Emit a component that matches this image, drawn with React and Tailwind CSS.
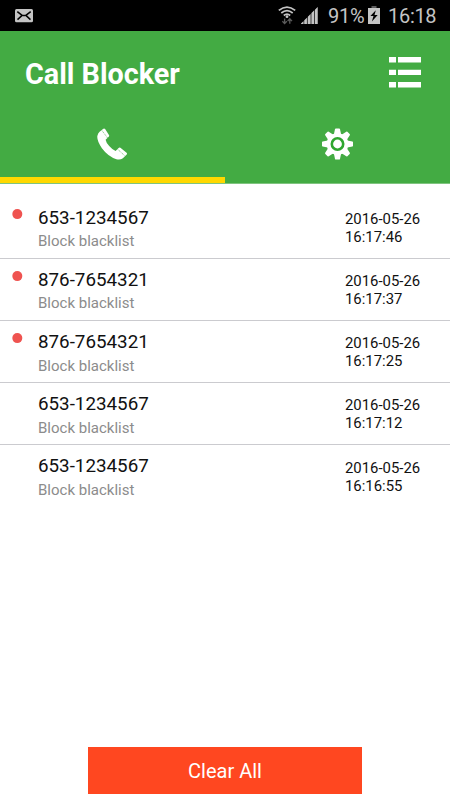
import React from "react";

const calls = [
  { number: "653-1234567", date: "2016-05-26", time: "16:17:46", unread: true },
  { number: "876-7654321", date: "2016-05-26", time: "16:17:37", unread: true },
  { number: "876-7654321", date: "2016-05-26", time: "16:17:25", unread: true },
  { number: "653-1234567", date: "2016-05-26", time: "16:17:12", unread: false },
  { number: "653-1234567", date: "2016-05-26", time: "16:16:55", unread: false },
];

function MailIcon() {
  return (
    <svg width="18" height="14" viewBox="0 0 18 14">
      <rect width="18" height="13.3" rx="1.5" fill="#c4c4c4" />
      <path d="M2.3 2.6 7.2 6.4h3.6l4.9-3.8M2.5 10.6l4.1-3.7M15.5 10.6l-4.1-3.7" fill="none" stroke="#000" strokeWidth="1.5" />
    </svg>
  );
}

function WifiIcon() {
  return (
    <svg width="18" height="19" viewBox="0 0 18 19">
      <g fill="none" stroke="#c4c4c4" strokeWidth="1.7">
        <path d="M.8 4.4Q9-2.3 17.2 4.4" />
        <path d="M3.3 7Q9 2.4 14.7 7" />
        <path d="M5.8 9.5Q9 6.9 12.2 9.5" />
      </g>
      <circle cx="9" cy="10.7" r="1.4" fill="#c4c4c4" />
      <path d="M6.6 12.5v5M4.4 15.2l2.2 2.4 2.2-2.4M11.8 17.8v-5M9.6 15.1l2.2-2.4 2.2 2.4" fill="none" stroke="#5c5c5c" strokeWidth="1.3" />
    </svg>
  );
}

function SignalIcon() {
  return (
    <svg width="17" height="17" viewBox="0 0 17 17">
      <path d="M0 17 16.7 0v17z" fill="#3c3c3c" />
      <path d="M0 17v-.6l2.4-2.2V17zM3.3 17v-3.7l2.6-2.6V17zM6.9 17V9.7l2.6-2.6V17zM10.5 17V6.1L13 3.6V17zM14 17V2.7L16.7 0v17z" fill="#c4c4c4" />
    </svg>
  );
}

function BatteryIcon() {
  return (
    <svg width="12" height="18" viewBox="0 0 12 18">
      <path d="M3.5 0h5v2h-5z" fill="#5c5c5c" />
      <path d="M0 2h12v16H0z" fill="#c4c4c4" />
      <path d="M7.8 4.2 2.4 10h3.1l-1.6 5.4L9.7 9H6.5z" fill="#000" />
    </svg>
  );
}

function ListIcon() {
  return (
    <svg width="32" height="31" viewBox="0 0 32 31" fill="#fff">
      <path d="M0 0h7v5.5H0zM9 0h23v5.5H9zM0 12.7h7v5.3H0zM9 12.7h23v5.3H9zM0 25h7v5.5H0zM9 25h23v5.5H9z" />
    </svg>
  );
}

function PhoneIcon() {
  return (
    <svg width="31" height="32" viewBox="0 0 31 32">
      <path
        d="M2.6 3.8 6 .9Q7.3.1 8.3 1.2L12.1 7.2Q12.4 8.1 11.7 8.8L8.6 11.8Q9 14.5 12.2 18.1 15.6 22 18.6 23.1L21.6 19.9Q22.5 19.2 23.4 19.8L29.6 24.8Q30.4 25.6 29.7 26.5L25.9 30.2Q23.2 32.2 19.4 31.2 11 28.4 4.9 20.2-.5 12.4.4 7.7.9 5.4 2.6 3.8Z"
        fill="#fff"
      />
      <path d="M5 2.6 10.6 10M20.6 21.2l7.2 6.6" stroke="#43ab43" strokeWidth=".8" strokeDasharray="1.2 .8" strokeOpacity=".8" />
    </svg>
  );
}

function GearIcon() {
  return (
    <svg width="31" height="32" viewBox="-15.5 -16 31 32">
      <g fill="#fff">
        {[0, 45, 90, 135, 180, 225, 270, 315].map((angle) => (
          <path key={angle} d="M-3.8-8.5-2.5-14.9Q-2.3-15.6-1.6-15.6h3.2Q2.3-15.6 2.5-14.9L3.8-8.5z" transform={`rotate(${angle})`} />
        ))}
        <circle r="10.8" />
      </g>
      <circle r="5.7" fill="none" stroke="#2fa62f" strokeWidth="2.6" />
    </svg>
  );
}

function StatusBar() {
  return (
    <div className="flex h-[31px] items-start bg-black pr-[14px] pl-[15px] text-[#c4c4c4]">
      <div className="pt-[9px]">
        <MailIcon />
      </div>
      <div className="ml-auto flex items-start">
        <div className="pt-[6px]">
          <WifiIcon />
        </div>
        <div className="ml-[5px] pt-[7px]">
          <SignalIcon />
        </div>
        <span className="ml-[10px] w-[37px] pt-[4px] text-[20px] leading-6 tracking-[-0.3px] whitespace-nowrap">91%</span>
        <div className="ml-[3px] pt-[6px]">
          <BatteryIcon />
        </div>
        <span className="ml-[8px] w-[48px] pt-[4px] text-[20px] leading-6 tracking-[-0.3px] whitespace-nowrap">16:18</span>
      </div>
    </div>
  );
}

function Header() {
  return (
    <header className="h-[153px] border-b border-[#7fc47f] bg-[#43ab43]">
      <div className="flex h-[84px] items-start justify-between pt-[26px] pr-[29px] pl-[25px]">
        <h1 className="pt-px text-[28.75px] leading-8 font-bold text-white">Call Blocker</h1>
        <ListIcon />
      </div>
      <div className="grid h-[68px] grid-cols-2">
        <div className="flex justify-center border-b-6 border-[#ffd800] pt-[13px]">
          <PhoneIcon />
        </div>
        <div className="flex justify-center pt-[13px]">
          <GearIcon />
        </div>
      </div>
    </header>
  );
}

function CallRow({ call }) {
  return (
    <li className="flex h-[62.15px] border-b border-[#cbcbcf] pr-[29px] pl-[12px] last:border-b-0">
      <div className="w-[26px] pt-[12px]">
        {call.unread && (
          <svg width="11" height="11" viewBox="0 0 11 11">
            <circle cx="5.3" cy="5.1" r="5" fill="#ef5350" />
          </svg>
        )}
      </div>
      <div className="flex-1 pt-[9px]">
        <p className="text-[18.8px] leading-6 text-[#111]">{call.number}</p>
        <p className="-mt-[0.35px] text-[15px] leading-6 text-[#8c8c8c]">Block blacklist</p>
      </div>
      <div className="w-[76px] pt-[13.3px] text-[14.9px] leading-[18px] text-[#111]">
        <p>{call.date}</p>
        <p>{call.time}</p>
      </div>
    </li>
  );
}

export default function App() {
  return (
    <div className="flex h-[800px] w-[450px] flex-col overflow-hidden bg-white font-[Roboto,sans-serif]">
      <StatusBar />
      <Header />
      <ul className="flex-1 pt-[12.7px]">
        {calls.map((call) => (
          <CallRow key={call.time} call={call} />
        ))}
      </ul>
      <div className="flex justify-center pb-[6px]">
        <button className="h-[47px] w-[274px] bg-[#ff4720] text-[20px] text-white">Clear All</button>
      </div>
    </div>
  );
}
